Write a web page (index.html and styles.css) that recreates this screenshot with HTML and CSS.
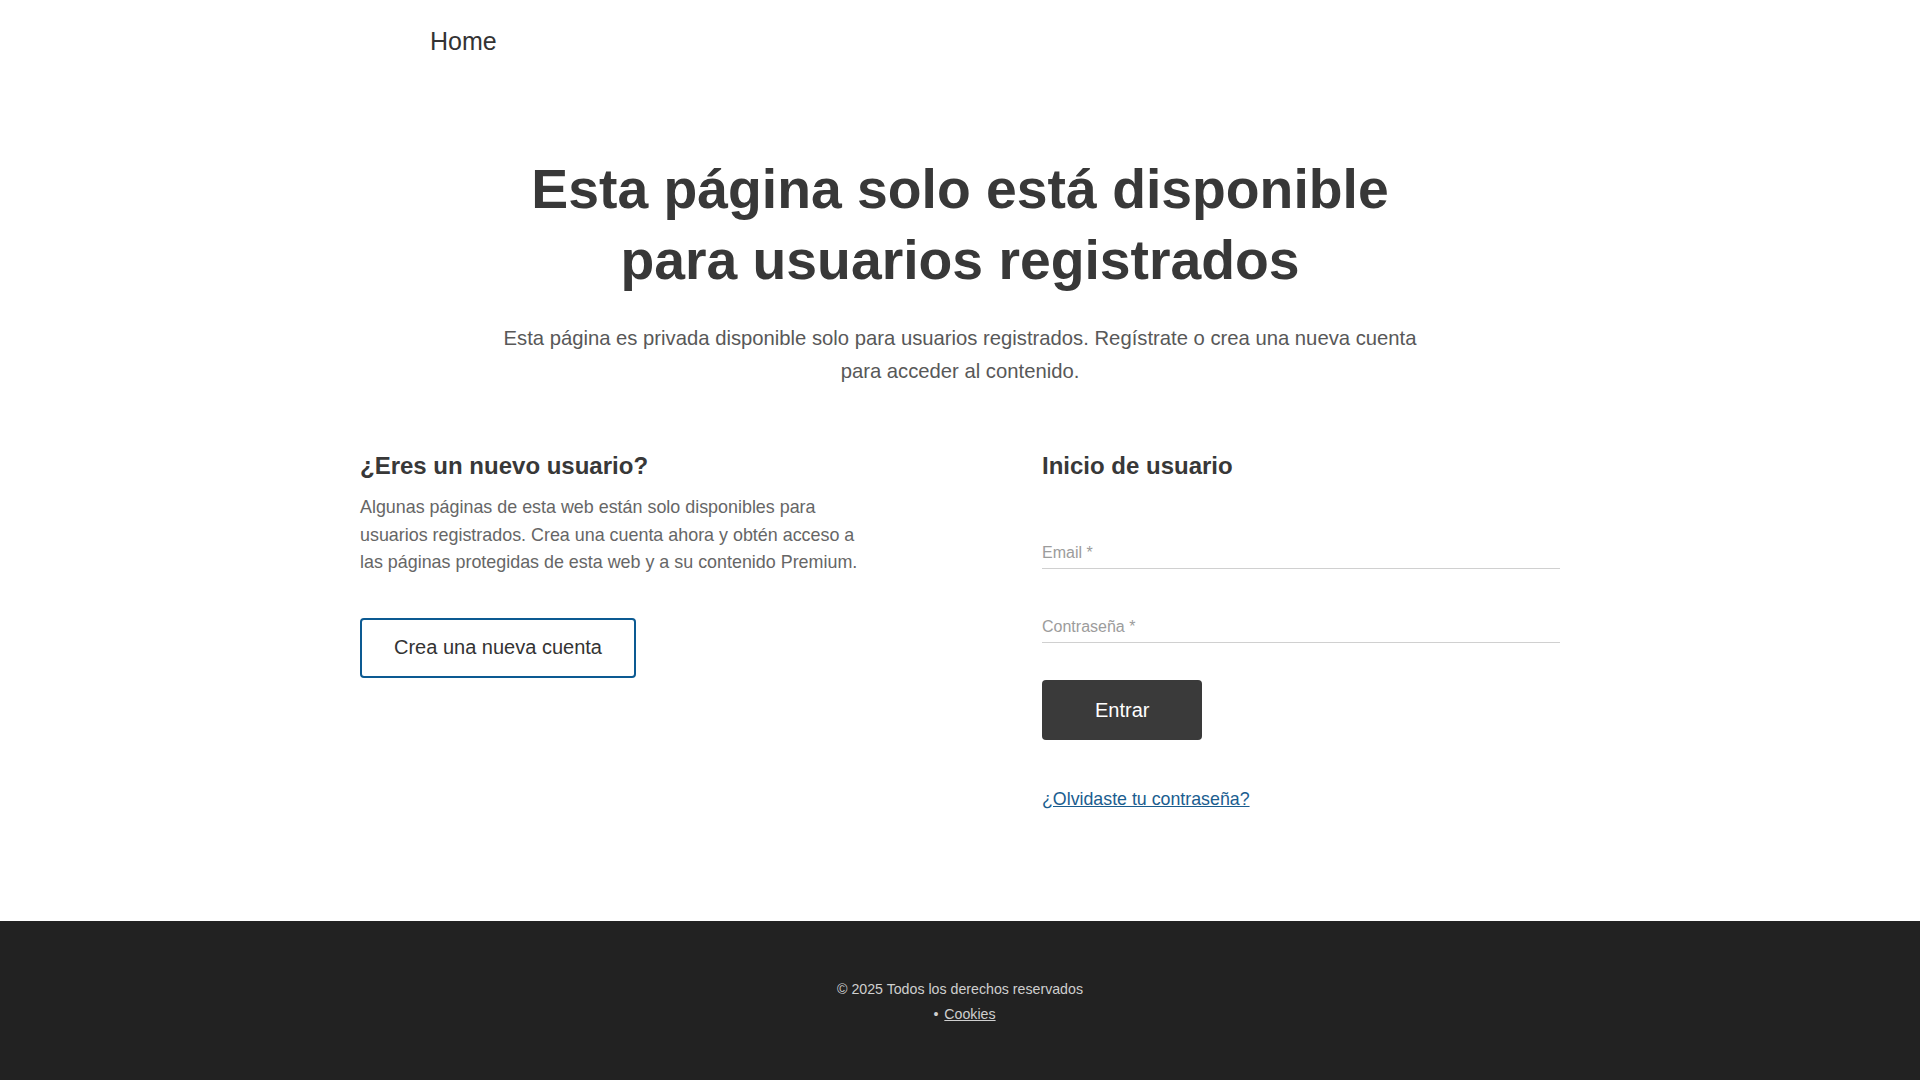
FILE: index.html
```html
<!DOCTYPE html>
<html lang="es">
<head>
<meta charset="utf-8">
<title>Página privada</title>
<link rel="stylesheet" href="styles.css">
</head>
<body>
<header class="site-header">
  <nav class="nav"><a class="nav-home" href="#">Home</a></nav>
</header>
<main class="main">
  <section class="intro">
    <h1 class="title">Esta página solo está disponible<br>para usuarios registrados</h1>
    <p class="lead">Esta página es privada disponible solo para usuarios registrados. Regístrate o crea una nueva cuenta para acceder al contenido.</p>
  </section>
  <section class="columns">
    <div class="col">
      <h2 class="col-title">¿Eres un nuevo usuario?</h2>
      <p class="col-text">Algunas páginas de esta web están solo disponibles para usuarios registrados. Crea una cuenta ahora y obtén acceso a las páginas protegidas de esta web y a su contenido Premium.</p>
      <a class="btn-outline" href="#">Crea una nueva cuenta</a>
    </div>
    <div class="col">
      <h2 class="col-title">Inicio de usuario</h2>
      <form class="login">
        <label class="field"><input class="field-input" type="email" placeholder="Email *"></label>
        <label class="field"><input class="field-input" type="password" placeholder="Contraseña *"></label>
        <button class="btn-dark" type="button">Entrar</button>
        <a class="forgot" href="#">¿Olvidaste tu contraseña?</a>
      </form>
    </div>
  </section>
</main>
<footer class="footer">
  <p class="copy">© 2025 Todos los derechos reservados</p>
  <ul class="footer-links"><li><a href="#">Cookies</a></li></ul>
</footer>
</body>
</html>
```
FILE: styles.css
```css
* { box-sizing: border-box; }
html, body { margin: 0; padding: 0; }
body {
  font-family: "Liberation Sans", Arial, sans-serif;
  color: #333;
  background: #fff;
}
.site-header {
  height: 82px;
  display: flex;
  align-items: center;
  padding-left: 430px;
}
.nav-home {
  font-size: 25px;
  color: #333;
  text-decoration: none;
}
.main {
  width: 1200px;
  margin: 0 auto;
}
.intro {
  text-align: center;
  padding-top: 72px;
}
.title {
  margin: 0;
  font-size: 55.3px;
  line-height: 71px;
  font-weight: 700;
  color: #383838;
}
.lead {
  width: 930px;
  margin: 26px auto 0;
  font-size: 20.25px;
  line-height: 33px;
  color: #585858;
}
.columns {
  display: grid;
  grid-template-columns: 518px 518px;
  justify-content: space-between;
  margin-top: 63px;
}
.col-title {
  margin: 0;
  font-size: 24px;
  line-height: 29px;
  font-weight: 700;
  color: #383838;
}
.col-text {
  margin: 14px 0 0;
  font-size: 17.9px;
  line-height: 27.5px;
  color: #666;
}
.btn-outline {
  display: inline-flex;
  align-items: center;
  height: 60px;
  margin-top: 41px;
  padding: 0 32px;
  border: 2px solid #0c5a92;
  border-radius: 4px;
  font-size: 20px;
  color: #333;
  text-decoration: none;
}
.login {
  display: flex;
  flex-direction: column;
  align-items: flex-start;
  margin-top: 47px;
}
.field {
  display: block;
  width: 100%;
  margin-bottom: 32px;
}
.field + .field { margin-bottom: 37px; }
.field-input {
  display: block;
  width: 100%;
  height: 42px;
  border: 0;
  border-bottom: 1px solid #d0d0d0;
  padding: 14px 0 4px;
  font-family: inherit;
  font-size: 16px;
  color: #333;
  background: transparent;
  outline: none;
}
.field-input::placeholder { color: #9c9c9c; opacity: 1; }
.btn-dark {
  height: 60px;
  padding: 0 53px;
  border: 0;
  border-radius: 4px;
  background: #3a3a3a;
  color: #fff;
  font-family: inherit;
  font-size: 20px;
}
.forgot {
  margin-top: 49px;
  font-size: 17.8px;
  color: #1a5d8f;
  text-decoration: underline;
}
.footer {
  margin-top: 111px;
  background: #222;
  height: 159px;
  padding-top: 57px;
  text-align: center;
  color: #cfcfcf;
  font-size: 14.2px;
}
.copy { margin: 0; line-height: 22px; }
.footer-links {
  list-style: none;
  margin: 3px 0 0;
  padding: 0;
  line-height: 22px;
}
.footer-links li {
  display: inline-block;
  padding-left: 9px;
}
.footer-links li::before {
  content: "•";
  margin-right: 6px;
}
.footer-links a { color: #cfcfcf; }
```
